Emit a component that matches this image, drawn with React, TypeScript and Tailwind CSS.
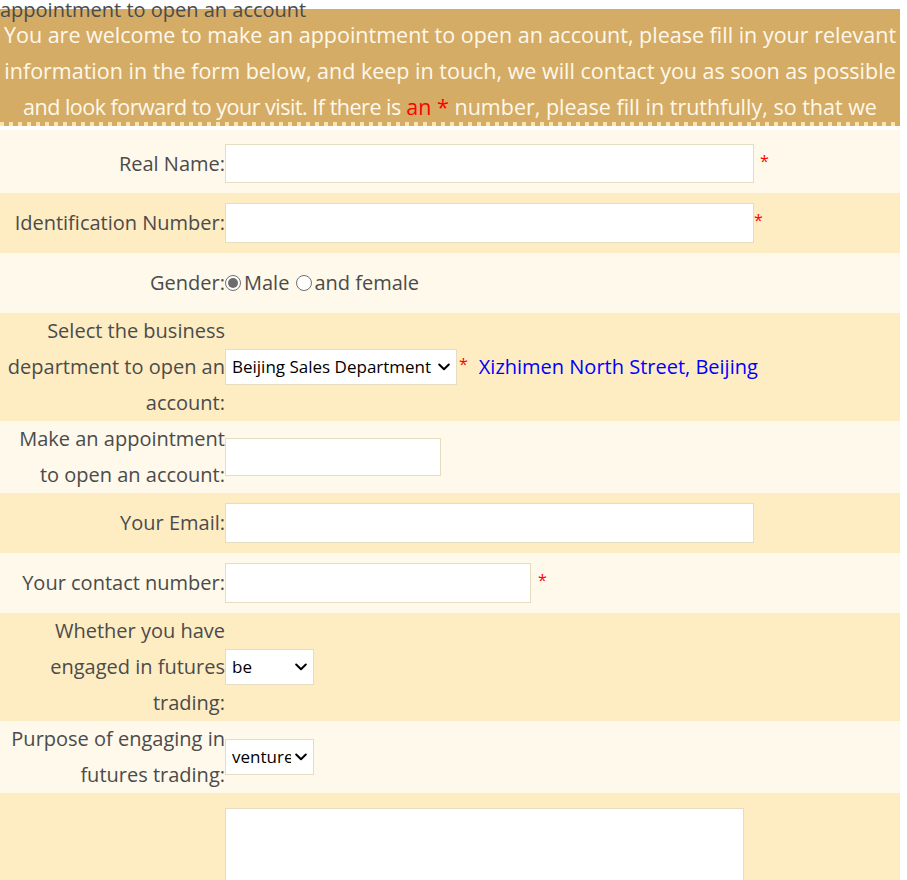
import type { ReactNode } from 'react';

const rowTone = {
  light: 'bg-[#fef9ea]',
  dark: 'bg-[#feedc3]',
};

interface RowProps {
  label?: ReactNode;
  tone: 'light' | 'dark';
  className?: string;
  children: ReactNode;
}

function Row({ label, tone, className = '', children }: RowProps) {
  return (
    <div className={`grid grid-cols-[225px_1fr] items-center ${rowTone[tone]} ${className}`}>
      <div className="text-right whitespace-nowrap leading-[36px]">{label}</div>
      <div className="flex items-center">{children}</div>
    </div>
  );
}

function Star({ className = '' }: { className?: string }) {
  return <span className={`text-[16px] leading-none text-[#ff0000] -translate-y-[3px] ${className}`}>*</span>;
}

function TextBox({ width, height = 'h-[40px]' }: { width: string; height?: string }) {
  return <input type="text" className={`${width} ${height} my-[10px] border border-[#e6dcbf] bg-white outline-none`} />;
}

function Chevron() {
  return (
    <svg width="12" height="8" viewBox="0 0 12 8" className="absolute right-[7px] top-1/2 -translate-y-1/2 pointer-events-none">
      <polyline points="1.2,1.5 6,6.2 10.8,1.5" fill="none" stroke="#000" strokeWidth="2" strokeLinecap="round" strokeLinejoin="round" />
    </svg>
  );
}

function Dropdown({ width, value, options }: { width: string; value: string; options: string[] }) {
  return (
    <div className={`relative ${width} h-[36px]`}>
      <select
        defaultValue={value}
        className="w-full h-full appearance-none border border-[#e6dcbf] bg-white pl-[6px] pr-[22px] text-[17px] text-black outline-none"
      >
        {options.map((o) => (
          <option key={o} value={o}>
            {o}
          </option>
        ))}
      </select>
      <Chevron />
    </div>
  );
}

function Radio({ checked }: { checked?: boolean }) {
  return (
    <span className="w-[16px] h-[16px] rounded-full border border-[#707070] bg-white flex items-center justify-center shrink-0">
      {checked && <span className="w-[10px] h-[10px] rounded-full bg-[#6c6c6c]" />}
    </span>
  );
}

export default function App() {
  return (
    <div className="w-[900px] bg-white text-[20px] text-[#4b4b4b] [font-family:'Open_Sans',sans-serif]">
      <div className="relative z-10 h-[9px] leading-[20px] whitespace-nowrap">appointment to open an account</div>

      {/* notice band */}
      <div className="bg-[#d4ac66]">
        <div className="h-[113px] overflow-hidden pt-[8px] text-center text-[21.5px] leading-[36px] text-[#fff8ea] whitespace-nowrap">
          You are welcome to make an appointment to open an account, please fill in your relevant
          <br />
          information in the form below, and keep in touch, we will contact you as soon as possible
          <br />
          <span className="tracking-[-0.5px]">and look forward to your visit. If there is</span>{' '}
          <span className="text-[#ff0000]">an</span> <span className="text-[#ff0000]">*</span> number, please fill in
          truthfully, so that we
        </div>
        <div className="h-[4px] bg-[repeating-linear-gradient(90deg,#fde4aa_0px,#fde4aa_4px,transparent_4px,transparent_9px)]" />
      </div>

      <form className="mt-[4px]">
        <Row label="Real Name:" tone="light" className="pt-[4px]">
          <TextBox width="w-[529px]" height="h-[39px]" />
          <Star className="ml-[6px]" />
        </Row>

        <Row label="Identification Number:" tone="dark">
          <TextBox width="w-[529px]" />
          <Star />
        </Row>

        <Row label="Gender:" tone="light" className="h-[60px]">
          <Radio checked />
          <span className="ml-[3px]">Male</span>
          <span className="ml-[7px]">
            <Radio />
          </span>
          <span className="ml-[2px]">and female</span>
        </Row>

        <Row
          tone="dark"
          label={
            <>
              Select the business
              <br />
              department to open an
              <br />
              account:
            </>
          }
        >
          <Dropdown width="w-[232px]" value="Beijing Sales Department" options={['Beijing Sales Department', 'Shanghai Sales Department']} />
          <Star className="ml-[2px]" />
          <span className="ml-[11px] text-[#0000ff]">Xizhimen North Street, Beijing</span>
        </Row>

        <Row
          tone="light"
          label={
            <>
              Make an appointment
              <br />
              to open an account:
            </>
          }
        >
          <TextBox width="w-[216px]" height="h-[38px]" />
        </Row>

        <Row label="Your Email:" tone="dark">
          <TextBox width="w-[529px]" />
        </Row>

        <Row label="Your contact number:" tone="light">
          <TextBox width="w-[306px]" />
          <Star className="ml-[7px]" />
        </Row>

        <Row
          tone="dark"
          label={
            <>
              Whether you have
              <br />
              engaged in futures
              <br />
              trading:
            </>
          }
        >
          <Dropdown width="w-[89px]" value="be" options={['be', 'no']} />
        </Row>

        <Row
          tone="light"
          label={
            <>
              Purpose of engaging in
              <br />
              futures trading:
            </>
          }
        >
          <Dropdown width="w-[89px]" value="venture" options={['venture', 'hedging', 'arbitrage']} />
        </Row>

        <div className={`grid grid-cols-[225px_1fr] items-start pb-[20px] ${rowTone.dark}`}>
          <div />
          <textarea className="mt-[15px] w-[519px] h-[130px] border border-[#e6dcbf] bg-white outline-none resize-none" />
        </div>
      </form>
    </div>
  );
}
